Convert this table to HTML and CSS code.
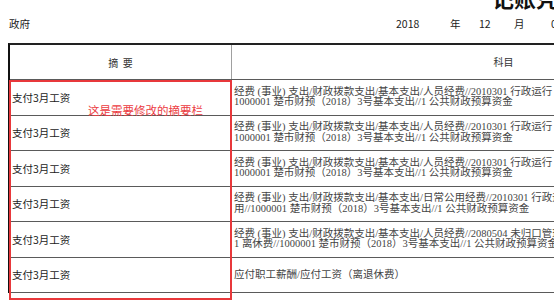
FILE: index.html
```html
<!DOCTYPE html>
<html lang="zh">
<head>
<meta charset="utf-8">
<link rel="stylesheet" href="styles.css">
</head>
<body>
<div class="page">
  <div class="title">记账凭证</div>
  <div class="meta">
    <span class="org">政府</span>
    <span>2018</span>
    <span>年</span>
    <span>12</span>
    <span>月</span>
    <span>0</span>
  </div>
  <div class="voucher">
    <div class="row head">
      <div class="c1">摘&nbsp;&nbsp;要</div>
      <div class="c2">科目</div>
    </div>
    <div class="row">
      <div class="c1">支付3月工资</div>
      <div class="c2"><span class="ln">经费 (事业) 支出/财政拨款支出/基本支出/人员经费//2010301 行政运行</span><span class="ln">1000001 楚市财预（2018）3号基本支出//1 公共财政预算资金</span></div>
    </div>
    <div class="row">
      <div class="c1">支付3月工资</div>
      <div class="c2"><span class="ln">经费 (事业) 支出/财政拨款支出/基本支出/人员经费//2010301 行政运行</span><span class="ln">1000001 楚市财预（2018）3号基本支出//1 公共财政预算资金</span></div>
    </div>
    <div class="row">
      <div class="c1">支付3月工资</div>
      <div class="c2"><span class="ln">经费 (事业) 支出/财政拨款支出/基本支出/人员经费//2010301 行政运行</span><span class="ln">1000001 楚市财预（2018）3号基本支出//1 公共财政预算资金</span></div>
    </div>
    <div class="row">
      <div class="c1">支付3月工资</div>
      <div class="c2"><span class="ln">经费 (事业) 支出/财政拨款支出/基本支出/日常公用经费//2010301 行政运行</span><span class="ln">用//1000001 楚市财预（2018）3号基本支出//1 公共财政预算资金</span></div>
    </div>
    <div class="row">
      <div class="c1">支付3月工资</div>
      <div class="c2"><span class="ln">经费 (事业) 支出/财政拨款支出/基本支出/人员经费//2080504 未归口管理</span><span class="ln">1 离休费//1000001 楚市财预（2018）3号基本支出//1 公共财政预算资金</span></div>
    </div>
    <div class="row">
      <div class="c1">支付3月工资</div>
      <div class="c2"><span class="ln">应付职工薪酬/应付工资（离退休费）</span></div>
    </div>
    <div class="redbox"></div>
    <div class="note">这是需要修改的摘要栏</div>
  </div>
</div>
</body>
</html>
```

FILE: styles.css
```css
html, body {
  margin: 0;
  padding: 0;
  background: #fff;
  overflow: hidden;
}
body {
  font-family: "Noto Sans CJK SC", "Liberation Sans", sans-serif;
  color: #222;
}
.page {
  width: 554px;
  height: 300px;
  overflow: hidden;
}
.title {
  height: 22px;
  margin-top: -14px;
  padding-left: 492px;
  font-size: 22px;
  line-height: 22px;
  font-weight: bold;
  color: #111;
  white-space: nowrap;
}
.meta {
  display: grid;
  grid-template-columns: 387px 54px 29px 35px 37px 40px;
  padding-left: 9px;
  height: 35px;
  line-height: 32px;
  font-size: 10.5px;
  color: #222;
  white-space: nowrap;
}
.voucher {
  position: relative;
  margin-left: 8px;
  width: 765px;
  border-left: 2px solid #111;
  border-top: 2px solid #222;
}
.row {
  display: grid;
  grid-template-columns: 222px 1fr;
  height: 35.5px;
  box-sizing: border-box;
  border-bottom: 1px solid #5a5a5a;
}
.row.head {
  height: 35px;
}
.c1 {
  border-right: 1px solid #a0a0a0;
  display: flex;
  align-items: center;
  padding-left: 2px;
  font-size: 10.5px;
  color: #222;
  white-space: nowrap;
}
.c2 {
  display: flex;
  flex-direction: column;
  justify-content: center;
  padding-left: 2px;
  font-family: "Liberation Serif", "Noto Sans CJK SC", serif;
  font-size: 10.5px;
  line-height: 10.5px;
  color: #444;
  white-space: nowrap;
  overflow: hidden;
}
.head .c1,
.head .c2 {
  justify-content: center;
  padding-left: 0;
  font-family: "Noto Sans CJK SC", sans-serif;
  font-size: 10px;
  color: #333;
}
.head .c2 {
  flex-direction: row;
  align-items: center;
}
.ln {
  display: block;
}
.redbox {
  position: absolute;
  left: -1px;
  top: 35px;
  width: 223px;
  height: 220px;
  box-sizing: border-box;
  border: 2px solid #e8383b;
}
.note {
  position: absolute;
  left: 78px;
  top: 59px;
  font-size: 11.5px;
  line-height: 13px;
  color: #ec3b3f;
  white-space: nowrap;
}
```
